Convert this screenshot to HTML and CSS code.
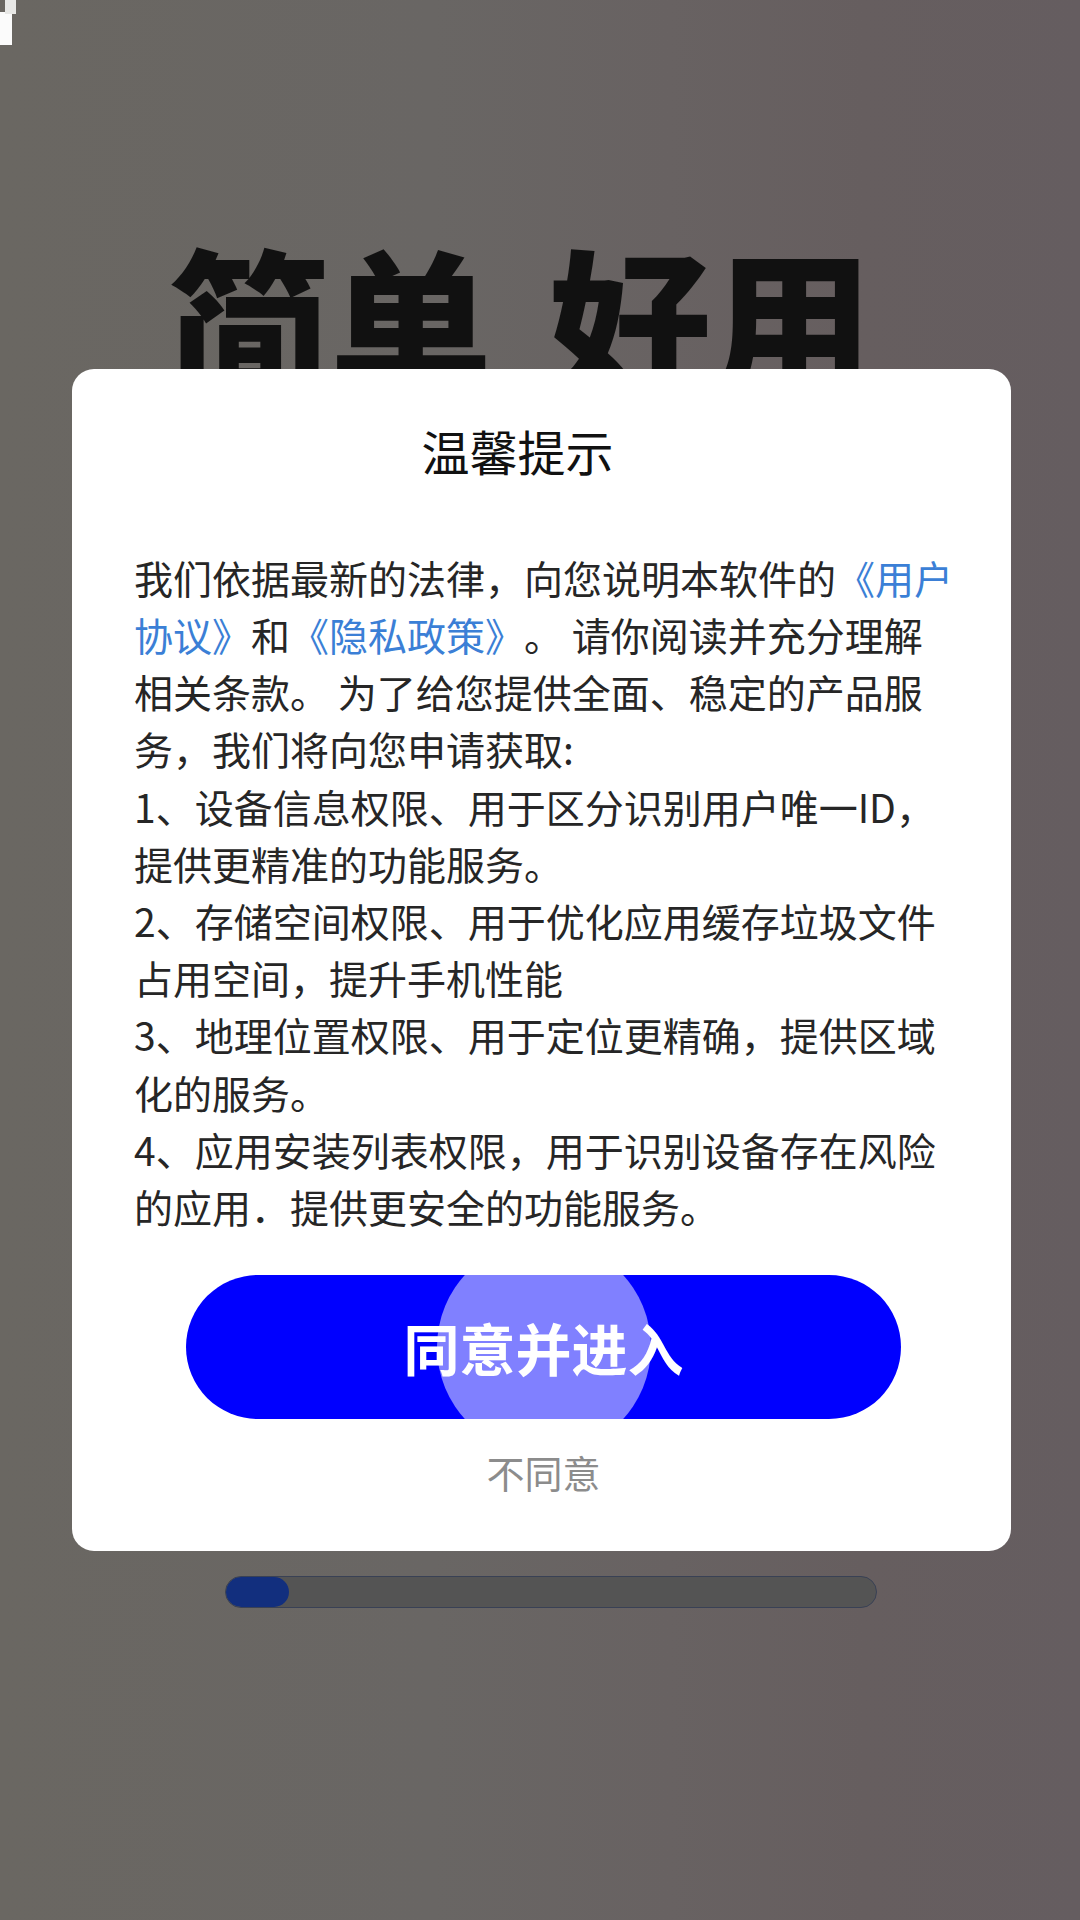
FILE: index.html
```html
<!DOCTYPE html>
<html lang="zh-CN">
<head>
<meta charset="utf-8">
<title>温馨提示</title>
<link rel="stylesheet" href="styles.css">
</head>
<body>
  <div class="screen">
    <div class="corner"></div>
    <h1 class="slogan">简单 好用</h1>
    <div class="progress"><div class="progress-fill" style="width: 63px"></div></div>
  </div>

  <div class="mask">
    <div class="dialog">
      <h2 class="dialog-title">温馨提示</h2>
      <div class="dialog-body">
        <p>我们依据最新的法律，向您说明本软件的<a class="link">《用户协议》</a>和<a class="link">《隐私政策》</a>。 请你阅读并充分理解相关条款。 为了给您提供全面、稳定的产品服务，我们将向您申请获取:</p>
        <p>1、设备信息权限、用于区分识别用户唯一ID，提供更精准的功能服务。</p>
        <p>2、存储空间权限、用于优化应用缓存垃圾文件占用空间，提升手机性能</p>
        <p>3、地理位置权限、用于定位更精确，提供区域化的服务。</p>
        <p>4、应用安装列表权限，用于识别设备存在风险的应用．提供更安全的功能服务。</p>
      </div>
      <div class="actions">
        <button class="btn-agree"><span class="ripple"></span><span class="btn-label">同意并进入</span></button>
        <button class="btn-refuse">不同意</button>
      </div>
    </div>
  </div>
</body>
</html>
```

FILE: styles.css
```css
* {
  box-sizing: border-box;
}

html, body {
  margin: 0;
  padding: 0;
}

body {
  width: 1080px;
  height: 1920px;
  overflow: hidden;
  font-family: "Noto Sans CJK SC", "Noto Sans", sans-serif;
  text-spacing-trim: space-all;
  background: linear-gradient(90deg, #6a6762 0%, #696664 40%, #686262 62%, #665e5f 80%, #655d60 100%);
}

.screen {
  position: relative;
  width: 1080px;
  height: 1920px;
  display: flex;
  flex-direction: column;
}

.corner {
  position: absolute;
  left: 0;
  top: 12px;
  width: 12px;
  height: 33px;
  background: #fbfbfb;
}

.corner::before {
  content: "";
  position: absolute;
  left: 5px;
  top: -12px;
  width: 11px;
  height: 14px;
  background: #e8e8e6;
}

.slogan {
  margin: 237px 0 0 0;
  padding-left: 168px;
  font-size: 162px;
  line-height: 1;
  font-weight: 900;
  color: #111111;
  word-spacing: 20px;
  white-space: nowrap;
}

.progress {
  margin: 1177px 0 0 225px;
  width: 652px;
  height: 32px;
  border: 1px solid #394155;
  border-radius: 16px;
  background: #545454;
  overflow: hidden;
}

.progress-fill {
  height: 100%;
  border-radius: 16px;
  background: #122f7e;
}

.mask {
  position: fixed;
  inset: 0;
  display: flex;
  align-items: center;
  justify-content: center;
  padding-left: 3px;
}

.dialog {
  width: 939px;
  background: #ffffff;
  border-radius: 22px;
  padding: 52px 0 51px 0;
  display: flex;
  flex-direction: column;
}

.dialog-title {
  margin: 0;
  padding-right: 48px;
  text-align: center;
  font-size: 48px;
  line-height: 58px;
  font-weight: 400;
  color: #111111;
}

.dialog-body {
  margin-top: 70px;
  padding: 0 56px 0 62px;
  font-size: 39px;
  line-height: 57.2px;
  color: #262626;
}

.dialog-body p {
  margin: 0;
}

.link {
  color: #3b7fd6;
  text-decoration: none;
}

.actions {
  margin: 40px 0 0 114px;
  width: 715px;
  display: flex;
  flex-direction: column;
  align-items: center;
}

.btn-agree {
  position: relative;
  width: 715px;
  height: 144px;
  border: none;
  border-radius: 72px;
  background: #0000ff;
  overflow: hidden;
  padding: 0;
  font-family: inherit;
  display: flex;
  align-items: center;
  justify-content: center;
}

.ripple {
  position: absolute;
  left: 50%;
  top: 50%;
  width: 214px;
  height: 214px;
  margin: -107px 0 0 -107px;
  border-radius: 50%;
  background: rgba(255, 255, 255, 0.5);
}

.btn-label {
  position: relative;
  font-size: 56px;
  line-height: 1;
  font-weight: 700;
  color: #ffffff;
}

.btn-refuse {
  margin-top: 25px;
  border: none;
  background: transparent;
  padding: 0;
  font-family: inherit;
  font-size: 38px;
  line-height: 56px;
  color: #8c8c8c;
}
```
